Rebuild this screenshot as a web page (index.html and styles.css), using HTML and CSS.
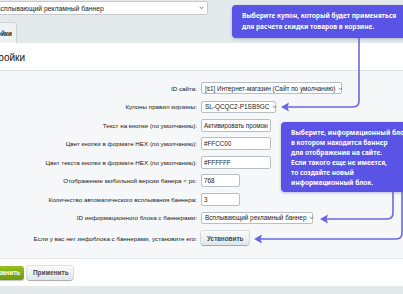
FILE: index.html
```html
<!DOCTYPE html>
<html lang="ru">
<head>
    <meta charset="UTF-8">
    <meta name="viewport" content="width=device-width, initial-scale=1.0">
    <title>Настройки модуля</title>
    <link rel="stylesheet" href="styles.css">
</head>
<body>
    <div class="top">
        <div class="select top-select">
            <span>Всплывающий рекламный баннер</span>
            <svg class="chev" viewBox="0 0 8 5"><path d="M1 1l3 3 3-3"/></svg>
        </div>
    </div>
    <div class="tabs">
        <div class="tab">Настройки</div>
    </div>
    <div class="heading"><h1>Настройки</h1></div>

    <div class="form">
        <div class="row">
            <label>ID сайта:</label>
            <div class="select w-site"><span>[s1] Интернет-магазин (Сайт по умолчанию)</span><svg class="chev" viewBox="0 0 8 5"><path d="M1 1l3 3 3-3"/></svg></div>
        </div>
        <div class="row">
            <label>Купоны правил корзины:</label>
            <div class="select w-coupon"><span>SL-QCQC2-P1SB9GC</span><svg class="chev" viewBox="0 0 8 5"><path d="M1 1l3 3 3-3"/></svg></div>
        </div>
        <div class="row">
            <label>Текст на кнопке (по умолчанию):</label>
            <input class="field w-text" type="text" value="Активировать промокод">
        </div>
        <div class="row">
            <label>Цвет кнопки в формате HEX (по умолчанию):</label>
            <input class="field w-text" type="text" value="#FFCC00">
        </div>
        <div class="row">
            <label>Цвет текста кнопки в формате HEX (по умолчанию):</label>
            <input class="field w-text" type="text" value="#FFFFFF">
        </div>
        <div class="row">
            <label>Отображение мобильной версии банера &lt; px:</label>
            <input class="field w-num" type="text" value="768">
        </div>
        <div class="row">
            <label>Количество автоматического всплывания баннера:</label>
            <input class="field w-num" type="text" value="3">
        </div>
        <div class="row">
            <label>ID информационного блока с баннерами:</label>
            <div class="select w-iblock"><span>Всплывающий рекламный баннер</span><svg class="chev" viewBox="0 0 8 5"><path d="M1 1l3 3 3-3"/></svg></div>
        </div>
        <div class="row row-last">
            <label>Если у вас нет инфоблока с баннерами, установите его:</label>
            <button class="btn btn-install">Установить</button>
        </div>
    </div>

    <div class="buttons">
        <button class="btn btn-save">Сохранить</button>
        <button class="btn btn-apply">Применить</button>
    </div>
    <div class="footer"></div>

    <div class="hint hint-coupon">
        Выберите купон, который будет применяться<br>
        для расчета скидки товаров в корзине.
    </div>
    <div class="hint hint-iblock">
        Выберите, информационный блок<br>
        в котором находится баннер<br>
        для отображения на сайте.<br>
        Если такого еще не имеется,<br>
        то создайте новый<br>
        информационный блок.
    </div>

    <svg class="arrows" width="403" height="294" viewBox="0 0 403 294">
        <path class="line" d="M359 38 V101 Q359 107 353 107 H286"/>
        <path class="head" d="M281 107 L289 102.5 L287.5 107 L289 111.5 Z"/>
        <path class="line" d="M393 192 V213 Q393 219 387 219 H325"/>
        <path class="head" d="M320 219 L328 214.5 L326.5 219 L328 223.5 Z"/>
        <path class="line" d="M402 192 V233 Q402 239 396 239 H259"/>
        <path class="head" d="M254 239 L262 234.5 L260.5 239 L262 243.5 Z"/>
    </svg>
</body>
</html>
```

FILE: styles.css
```css
body {
    margin: 0;
    width: 403px;
    height: 294px;
    overflow: hidden;
    position: relative;
    font-family: "Liberation Sans", Arial, sans-serif;
    font-size: 6.25px;
    color: #222;
    background-color: #e4eaec;
}
.top {
    height: 16px;
    padding-top: 1px;
    box-sizing: border-box;
}
.select {
    display: flex;
    align-items: center;
    justify-content: space-between;
    box-sizing: border-box;
    height: 12px;
    padding: 0 3px;
    background-color: white;
    border: 1px solid #b7bfc3;
    border-radius: 2px;
    font-size: 6.4px;
    color: #222;
    white-space: nowrap;
}
.chev {
    width: 5px;
    height: 3.5px;
    margin-left: 3px;
    flex-shrink: 0;
    fill: none;
    stroke: #555;
    stroke-width: 1.2;
}
.top-select {
    margin-left: -6px;
    width: 214px;
    height: 14px;
    padding-left: 4px;
    font-size: 6.8px;
    border-color: #c4cbce;
}
.top-select span {
    margin-left: -3px;
}
.tabs {
    height: 27px;
    padding-top: 6px;
    box-sizing: border-box;
}
.tab {
    margin-left: -40px;
    width: 57px;
    height: 21px;
    box-sizing: border-box;
    display: flex;
    align-items: center;
    justify-content: flex-end;
    padding-right: 4px;
    background-color: #eef2f3;
    border: 1px solid #cdd5d8;
    border-bottom: none;
    border-radius: 0 3px 0 0;
    font-weight: bold;
    font-size: 6.4px;
}
.heading {
    height: 28px;
    background-color: white;
    border-bottom: 1px solid #dbe1e3;
    box-sizing: border-box;
    display: flex;
    align-items: center;
}
.heading h1 {
    margin: 2px 0 0 -24px;
    font-size: 10px;
    font-weight: normal;
    color: #111;
}
.form {
    background-color: #f5f7f8;
    border-bottom: 1px solid #e2e6e8;
    padding: 8px 0 10px;
}
.row {
    display: flex;
    align-items: center;
    height: 18.5px;
}
.row label {
    width: 197px;
    flex-shrink: 0;
    text-align: right;
    padding-right: 4px;
    white-space: nowrap;
}
.row-last {
    height: 20px;
    margin-top: 1px;
}
.field {
    box-sizing: border-box;
    height: 13px;
    margin: 0;
    padding: 0 2px;
    border: 1px solid #b7bfc3;
    border-radius: 2px;
    font-family: "Liberation Sans", Arial, sans-serif;
    font-size: 6.3px;
    color: #222;
    background-color: white;
}
.w-site { width: 141px; }
.w-coupon { width: 75px; }
.w-text { width: 70px; }
.w-num { width: 39px; }
.w-iblock { width: 112px; }
.btn {
    box-sizing: border-box;
    margin: 0;
    border: none;
    border-radius: 3px;
    font-family: "Liberation Sans", Arial, sans-serif;
    font-size: 6.4px;
    font-weight: bold;
    color: #3d4850;
    background: linear-gradient(#fbfcfc, #dfe6e8);
    box-shadow: 0 1px 1px rgba(0, 0, 0, 0.25), 0 0 0 1px rgba(160, 172, 178, 0.35);
    cursor: pointer;
}
.btn-install {
    width: 48px;
    height: 14px;
}
.buttons {
    height: 27px;
    background-color: white;
    display: flex;
    align-items: center;
    gap: 3px;
}
.btn-save {
    margin-left: -20px;
    width: 44px;
    height: 14px;
    color: white;
    background: linear-gradient(#97c021, #6f9a0a);
    box-shadow: 0 1px 1px rgba(0, 0, 0, 0.25);
    text-align: right;
    padding-right: 4px;
}
.btn-apply {
    width: 46px;
    height: 14px;
}
.footer {
    height: 8px;
    background-color: #e4eaec;
}
.hint {
    position: absolute;
    box-sizing: border-box;
    background-color: #5954e6;
    color: white;
    border-radius: 4px;
    font-family: "Noto Sans", "Liberation Sans", sans-serif;
    font-weight: bold;
    font-size: 6.5px;
    white-space: nowrap;
    box-shadow: 0 1px 3px rgba(40, 40, 120, 0.3);
}
.hint-coupon {
    left: 232px;
    top: 5px;
    width: 190px;
    height: 33px;
    padding: 5px 0 0 10px;
    line-height: 11px;
}
.hint-iblock {
    left: 281px;
    top: 122px;
    width: 140px;
    height: 70px;
    padding: 6px 0 0 10px;
    line-height: 10px;
}
.arrows {
    position: absolute;
    left: 0;
    top: 0;
    pointer-events: none;
}
.arrows .line {
    fill: none;
    stroke: #6b67e4;
    stroke-width: 1.6;
}
.arrows .head {
    fill: #6b67e4;
}
```
